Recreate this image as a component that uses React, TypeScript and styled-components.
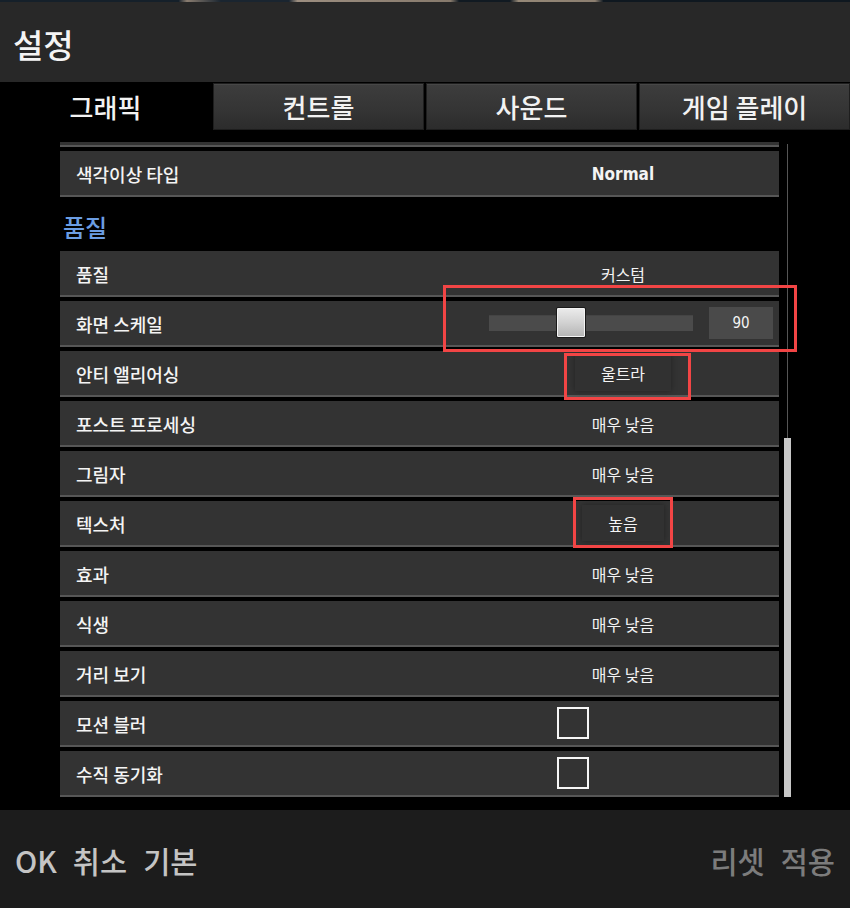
import React from "react";
import styled, { createGlobalStyle } from "styled-components";

const Global = createGlobalStyle`
  html, body { margin: 0; padding: 0; background: #000; }
  body { font-family: "Noto Sans CJK KR", "Noto Sans", sans-serif; }
`;

const KR = `"Noto Sans CJK KR", "Noto Sans", sans-serif`;
const COND = `"DejaVu Sans Condensed", "Liberation Sans Narrow", "Noto Sans CJK KR", sans-serif`;

const Screen = styled.div`
  position: relative;
  width: 850px;
  height: 908px;
  display: flex;
  flex-direction: column;
  background: #000;
  overflow: hidden;
`;

const TopStrip = styled.div`
  height: 2px;
  background: linear-gradient(
    90deg,
    #15202a 0%, #15202a 21%, #8a7d70 22%, #1a2530 26%, #1a2530 34%,
    #9c8e80 35%, #877a6c 53%, #111a22 54%, #111a22 60%, #958877 61%, #8c7f70 70%,
    #0f1820 71%, #0f1820 100%
  );
`;

const Header = styled.div`
  height: 80px;
  background: #282828;
  display: flex;
  align-items: center;
  padding-left: 13px;
`;

const Title = styled.h1`
  margin: 0;
  font-family: ${KR};
  font-size: 33px;
  font-weight: 500;
  color: #f4f4f4;
  line-height: 1;
  padding-top: 4px;
`;

const TabBar = styled.div`
  height: 49px;
  display: grid;
  grid-template-columns: repeat(4, 1fr);
  column-gap: 2px;
  padding-top: 1px;
  box-sizing: border-box;
  background: #000;
`;

const Tab = styled.div<{ $active?: boolean }>`
  height: 47px;
  box-sizing: border-box;
  display: flex;
  align-items: center;
  justify-content: center;
  font-family: ${KR};
  font-size: 26px;
  font-weight: 500;
  color: #f2f2f2;
  background: ${(p) =>
    p.$active ? "#000" : "linear-gradient(180deg, #3d3d3d 0%, #343434 60%, #2c2c2c 100%)"};
  border: 1px solid ${(p) => (p.$active ? "#000" : "#1e1e1e")};
  box-shadow: ${(p) => (p.$active ? "none" : "inset 0 1px 0 #474747")};
`;

const Body = styled.div`
  flex: 1;
  display: flex;
  padding: 11px 0 13px 60px;
  background: #000;
`;

const Viewport = styled.div`
  width: 719px;
  overflow: hidden;
`;

const List = styled.div`
  display: flex;
  flex-direction: column;
  gap: 4px;
  margin-top: -41px;
`;

const Row = styled.div`
  height: 46px;
  box-sizing: border-box;
  background: #333333;
  border-bottom: 2px solid #575757;
  display: grid;
  grid-template-columns: 1fr 312px;
  align-items: center;
`;

const Label = styled.div`
  padding-left: 16px;
  font-family: ${KR};
  font-size: 18px;
  font-weight: 500;
  color: #f4f4f4;
  padding-top: 2px;
`;

const Value = styled.div<{ $cond?: boolean; $boxed?: boolean }>`
  justify-self: center;
  font-family: ${(p) => (p.$cond ? COND : KR)};
  font-size: ${(p) => (p.$cond ? "17px" : "16px")};
  font-weight: ${(p) => (p.$cond ? 700 : 400)};
  color: #f4f4f4;
  padding: ${(p) => (p.$boxed ? "6px 26px" : "2px 0 0")};
  box-shadow: ${(p) => (p.$boxed ? "0 0 6px rgba(0,0,0,0.35)" : "none")};
  background: ${(p) => (p.$boxed ? "#313131" : "transparent")};
`;

const SliderCell = styled.div`
  display: flex;
  align-items: center;
  gap: 16px;
  padding: 0 6px 0 22px;
`;

const Track = styled.div`
  position: relative;
  flex: 1;
  height: 16px;
  background: #4b4b4b;
  box-shadow: inset 0 1px 0 #444;
`;

const Thumb = styled.div`
  position: absolute;
  top: -8px;
  width: 30px;
  height: 31px;
  box-sizing: border-box;
  border: 1px solid #1a1a1a;
  border-radius: 2px;
  background: linear-gradient(180deg, #ececec 0%, #d2d2d2 50%, #b4b4b4 100%);
  box-shadow: inset 0 0 0 1px #f4f4f4;
`;

const NumBox = styled.div`
  width: 64px;
  height: 32px;
  background: #4a4a4a;
  display: flex;
  align-items: center;
  justify-content: center;
  font-family: ${COND};
  font-size: 15px;
  color: #f4f4f4;
`;

const CheckCell = styled.div`
  padding-left: 90px;
  display: flex;
  align-items: center;
`;

const CheckBox = styled.div`
  width: 32px;
  height: 32px;
  box-sizing: border-box;
  border: 2px solid #f6f6f6;
`;

const SectionHeader = styled.div`
  height: 46px;
  display: flex;
  align-items: flex-end;
  padding-left: 3px;
  font-family: ${KR};
  font-size: 24px;
  font-weight: 500;
  color: #6b9de3;
  line-height: 1;
  padding-bottom: 8px;
  box-sizing: border-box;
`;

const ScrollArea = styled.div`
  width: 7px;
  margin-left: 5px;
  display: flex;
  flex-direction: column;
  align-items: center;
`;

const ScrollLine = styled.div`
  width: 1px;
  height: 294px;
  margin-top: 2px;
  background: #555;
`;

const ScrollThumb = styled.div`
  width: 7px;
  flex: 1;
  background: #c7c7c7;
`;

const Footer = styled.div`
  height: 98px;
  background: #1c1c1c;
  display: flex;
  align-items: center;
  justify-content: space-between;
  padding: 0 15px 0 15px;
  box-sizing: border-box;
`;

const FooterGroup = styled.div`
  display: flex;
  gap: 16px;
`;

const FooterBtn = styled.span<{ $disabled?: boolean }>`
  font-family: ${KR};
  font-size: 29.5px;
  font-weight: 500;
  color: ${(p) => (p.$disabled ? "#7c7c7c" : "#c4c4c4")};
  line-height: 1;
  padding-top: 4px;
`;

const Mark = styled.div<{ $x: number; $y: number; $w: number; $h: number }>`
  position: absolute;
  left: ${(p) => p.$x}px;
  top: ${(p) => p.$y}px;
  width: ${(p) => p.$w}px;
  height: ${(p) => p.$h}px;
  box-sizing: border-box;
  border: 3px solid #f24545;
  pointer-events: none;
`;

type Item =
  | { kind: "section"; label: string }
  | { kind: "text"; label: string; value: string; cond?: boolean; boxed?: boolean }
  | { kind: "slider"; label: string; value: number; min: number; max: number }
  | { kind: "check"; label: string }
  | { kind: "blank" };

const items: Item[] = [
  { kind: "blank" },
  { kind: "text", label: "색각이상 타입", value: "Normal", cond: true },
  { kind: "section", label: "품질" },
  { kind: "text", label: "품질", value: "커스텀" },
  { kind: "slider", label: "화면 스케일", value: 90, min: 25, max: 194 },
  { kind: "text", label: "안티 앨리어싱", value: "울트라", boxed: true },
  { kind: "text", label: "포스트 프로세싱", value: "매우 낮음" },
  { kind: "text", label: "그림자", value: "매우 낮음" },
  { kind: "text", label: "텍스처", value: "높음", boxed: true },
  { kind: "text", label: "효과", value: "매우 낮음" },
  { kind: "text", label: "식생", value: "매우 낮음" },
  { kind: "text", label: "거리 보기", value: "매우 낮음" },
  { kind: "check", label: "모션 블러" },
  { kind: "check", label: "수직 동기화" },
];

function renderItem(it: Item, i: number) {
  switch (it.kind) {
    case "blank":
      return <Row key={i} />;
    case "section":
      return <SectionHeader key={i}>{it.label}</SectionHeader>;
    case "text":
      return (
        <Row key={i}>
          <Label>{it.label}</Label>
          <Value $cond={it.cond} $boxed={it.boxed}>
            {it.value}
          </Value>
        </Row>
      );
    case "slider": {
      const r = (it.value - it.min) / (it.max - it.min);
      return (
        <Row key={i}>
          <Label>{it.label}</Label>
          <SliderCell>
            <Track>
              <Thumb style={{ left: `calc(${r} * (100% - 30px))` }} />
            </Track>
            <NumBox>{it.value}</NumBox>
          </SliderCell>
        </Row>
      );
    }
    case "check":
      return (
        <Row key={i}>
          <Label>{it.label}</Label>
          <CheckCell>
            <CheckBox />
          </CheckCell>
        </Row>
      );
  }
}

export default function App() {
  return (
    <Screen>
      <Global />
      <TopStrip />
      <Header>
        <Title>설정</Title>
      </Header>
      <TabBar>
        <Tab $active>그래픽</Tab>
        <Tab>컨트롤</Tab>
        <Tab>사운드</Tab>
        <Tab>게임 플레이</Tab>
      </TabBar>
      <Body>
        <Viewport>
          <List>{items.map(renderItem)}</List>
        </Viewport>
        <ScrollArea>
          <ScrollLine />
          <ScrollThumb />
        </ScrollArea>
      </Body>
      <Footer>
        <FooterGroup>
          <FooterBtn>OK</FooterBtn>
          <FooterBtn>취소</FooterBtn>
          <FooterBtn>기본</FooterBtn>
        </FooterGroup>
        <FooterGroup>
          <FooterBtn $disabled>리셋</FooterBtn>
          <FooterBtn $disabled>적용</FooterBtn>
        </FooterGroup>
      </Footer>
      <Mark $x={443} $y={285} $w={354} $h={67} />
      <Mark $x={564} $y={353} $w={127} $h={47} />
      <Mark $x={573} $y={497} $w={100} $h={51} />
    </Screen>
  );
}
